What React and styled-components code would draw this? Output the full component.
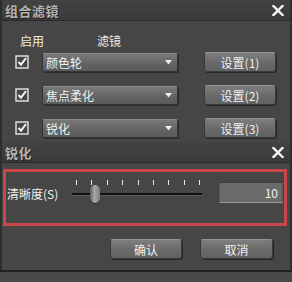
import React from 'react';
import styled, { createGlobalStyle } from 'styled-components';

const GlobalStyle = createGlobalStyle`
  body {
    margin: 0;
    background: #464646;
    font-family: "Noto Sans CJK SC", "Liberation Sans", sans-serif;
  }
`;

const Screen = styled.div`
  width: 292px;
  height: 282px;
  overflow: hidden;
  background: #474747;
  display: flex;
  flex-direction: column;
`;

const Window = styled.div`
  display: flex;
  flex-direction: column;
  border-left: 2px solid #2e2e2e;
  border-right: 2px solid #2e2e2e;
  background: #464646;
`;

const TitleBar = styled.div`
  height: 20px;
  flex: none;
  display: flex;
  align-items: center;
  justify-content: space-between;
  padding: 0 6px 0 3px;
  background: linear-gradient(#434343, #3a3a3a);
  border-bottom: 1px solid #2a2a2a;
`;

const Title = styled.span`
  color: #b4b4b4;
  font-size: 13px;
  font-weight: bold;
  letter-spacing: 0.5px;
  text-shadow: 1px 1px 0 #222;
`;

const FilterBody = styled.div`
  height: 121px;
  padding: 10px 0 0 0;
  box-sizing: border-box;
`;

const HeaderRow = styled.div`
  display: flex;
  height: 18px;
  align-items: center;
  color: #ececec;
  font-size: 12px;
`;

const HeaderLabel = styled.span`
  width: ${p => p.$w}px;
  padding-left: ${p => p.$pl || 0}px;
`;

const FilterRow = styled.div`
  display: flex;
  align-items: center;
  height: 20px;
  margin-top: ${p => p.$mt}px;
  padding-left: 13px;
`;

const Check = styled.div`
  width: 14px;
  height: 14px;
  display: flex;
`;

const Select = styled.div`
  margin-left: 13px;
  width: 136px;
  height: 19px;
  box-sizing: border-box;
  display: flex;
  align-items: center;
  justify-content: space-between;
  padding: 0 5px 0 3px;
  border-radius: 2px;
  background: linear-gradient(#7a7a7a, #626262 60%, #5a5a5a);
  border: 1px solid #333;
  border-top-color: #8a8a8a;
  color: #f2f2f2;
  font-size: 12px;
  box-shadow: 1px 1px 0 #2c2c2c;
`;

const Button = styled.div`
  width: ${p => p.$w || 72}px;
  height: 20px;
  box-sizing: border-box;
  display: flex;
  align-items: center;
  justify-content: center;
  margin-left: ${p => p.$ml || 0}px;
  border-radius: 3px;
  background: linear-gradient(#7e7e7e, #696969 55%, #616161);
  border: 1px solid #3a3a3a;
  border-top-color: #939393;
  box-shadow: 1px 1px 0 #262626;
  color: #f0f0f0;
  font-size: 12px;
`;

const RedBox = styled.div`
  margin: 6px 3px 0 1px;
  height: 57px;
  box-sizing: border-box;
  border: 3px solid #c9474b;
  display: flex;
  align-items: flex-start;
  padding: 8px 0 0 1px;
`;

const FieldLabel = styled.span`
  width: 65px;
  margin-top: 6px;
  color: #f0f0f0;
  font-size: 12px;
  line-height: 16px;
`;

const Slider = styled.div`
  position: relative;
  width: 130px;
  height: 24px;
`;

const Ticks = styled.div`
  display: flex;
  justify-content: space-between;
  padding: 0 2px 0 4px;
  height: 5px;
`;

const Tick = styled.span`
  width: 1px;
  height: 5px;
  background: #e8e8e8;
`;

const Track = styled.div`
  margin-top: 8px;
  height: 2px;
  background: #111;
  border-bottom: 1px solid #5a5a5a;
`;

const Thumb = styled.div`
  position: absolute;
  left: 18px;
  top: 5px;
  width: 10px;
  height: 18px;
  border-radius: 5px;
  background: linear-gradient(90deg, #5d5d5d, #a8a8a8 45%, #7c7c7c);
  box-shadow: 0 1px 0 #2a2a2a;
`;

const NumberField = styled.div`
  margin: 2px 0 0 17px;
  width: 64px;
  height: 21px;
  box-sizing: border-box;
  display: flex;
  align-items: center;
  justify-content: flex-end;
  padding-right: 4px;
  background: #6a6a6a;
  border: 1px solid #555;
  border-bottom-color: #9a9a9a;
  border-top-color: #3e3e3e;
  color: #f4f4f4;
  font-size: 12px;
`;

const ButtonRow = styled.div`
  display: flex;
  margin-top: 13px;
  padding: 0 0 11px 108px;
`;

const BottomStrip = styled.div`
  flex: 1;
  border-top: 2px solid #202020;
  background: #4a4a4a;
`;

const CloseIcon = () => (
  <svg width="12" height="11" viewBox="0 0 12 11">
    <path d="M1.5 1 L10.5 10 M10.5 1 L1.5 10" stroke="#f4f4f4" strokeWidth="2.4" strokeLinecap="square" />
  </svg>
);

const CheckIcon = () => (
  <svg width="14" height="14" viewBox="0 0 14 14">
    <rect x="1" y="1" width="12" height="12" fill="none" stroke="#e6e6e6" strokeWidth="1.4" />
    <path d="M3.5 7 L6 9.6 L11 3" fill="none" stroke="#f4f4f4" strokeWidth="2" />
  </svg>
);

const Arrow = () => (
  <svg width="7" height="5" viewBox="0 0 7 5">
    <path d="M0 0 H7 L3.5 4.5 Z" fill="#f0f0f0" />
  </svg>
);

const filters = ['颜色轮', '焦点柔化', '锐化'];

export default function App() {
  return (
    <Screen>
      <GlobalStyle />
      <Window>
        <TitleBar>
          <Title>组合滤镜</Title>
          <CloseIcon />
        </TitleBar>
        <FilterBody>
          <HeaderRow>
            <HeaderLabel $w={77} $pl={18}>启用</HeaderLabel>
            <HeaderLabel $w={40}>滤镜</HeaderLabel>
          </HeaderRow>
          {filters.map((name, i) => (
            <FilterRow key={name} $mt={i === 0 ? 3 : 13}>
              <Check><CheckIcon /></Check>
              <Select>
                <span>{name}</span>
                <Arrow />
              </Select>
              <Button $ml={26}>设置({i + 1})</Button>
            </FilterRow>
          ))}
        </FilterBody>
      </Window>
      <Window>
        <TitleBar>
          <Title>锐化</Title>
          <CloseIcon />
        </TitleBar>
        <RedBox>
          <FieldLabel>清晰度(S)</FieldLabel>
          <Slider>
            <Ticks>
              {Array.from({ length: 9 }).map((_, i) => <Tick key={i} />)}
            </Ticks>
            <Track />
            <Thumb />
          </Slider>
          <NumberField>10</NumberField>
        </RedBox>
        <ButtonRow>
          <Button>确认</Button>
          <Button $ml={18} $w={73}>取消</Button>
        </ButtonRow>
      </Window>
      <BottomStrip />
    </Screen>
  );
}
